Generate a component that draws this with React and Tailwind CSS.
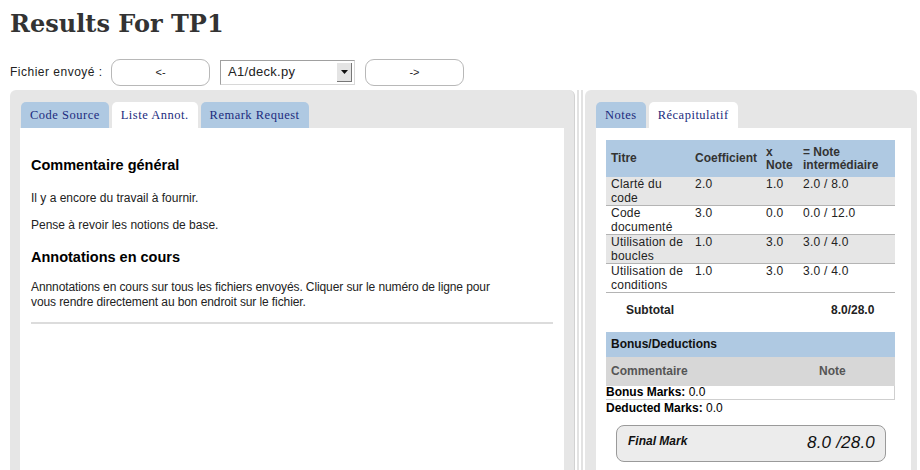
import { useState } from "react"

const rows = [
  { titre: "Clarté du code", coef: "2.0", note: "1.0", inter: "2.0 / 8.0" },
  { titre: "Code documenté", coef: "3.0", note: "0.0", inter: "0.0 / 12.0" },
  { titre: "Utilisation de boucles", coef: "1.0", note: "3.0", inter: "3.0 / 4.0" },
  { titre: "Utilisation de conditions", coef: "1.0", note: "3.0", inter: "3.0 / 4.0" },
]

function Tab({ label, active, onClick }) {
  return (
    <button
      onClick={onClick}
      className={
        "h-[26px] px-[9px] rounded-t-[5px] text-[12.5px] tracking-[0.5px] text-[#1c2b7e] font-['Liberation_Serif',serif] " +
        (active ? "bg-white" : "bg-[#afc9e2]")
      }
    >
      {label}
    </button>
  )
}

function App() {
  const [leftTab, setLeftTab] = useState(1)
  const [rightTab, setRightTab] = useState(1)

  return (
    <div className="w-[920px] h-[470px] overflow-hidden bg-white text-[#222] font-['Liberation_Sans',Arial,sans-serif]">
      <h1 className="pl-[10px] pt-[6px] h-[58px] text-[24px] font-bold text-[#333] font-['DejaVu_Serif','Liberation_Serif',serif]">
        Results For TP1
      </h1>

      <div className="flex items-center h-[28px] pl-[10px] text-[12px]">
        <span className="w-[101px] tracking-[0.5px]">Fichier envoyé :</span>
        <button className="w-[99px] h-[27px] rounded-[9px] border-[1.5px] border-[#b8b8b8] bg-white text-[11px]">
          &lt;-
        </button>
        <div className="ml-[10px] w-[135px] h-[25px] flex items-center border border-[#a0a0a0] border-b-[#d8d8d8] border-r-[#d8d8d8] bg-white">
          <span className="flex-1 pl-[7px] text-[13px] tracking-[0.3px]">A1/deck.py</span>
          <span className="w-[15px] h-[19px] mr-[2px] flex items-center justify-center bg-[#e4e4e4] border-r border-b border-[#777]">
            <svg width="7" height="4" viewBox="0 0 7 4"><path d="M0 0h7L3.5 4z" fill="#111" /></svg>
          </span>
        </div>
        <button className="ml-[10px] w-[99px] h-[27px] rounded-[9px] border-[1.5px] border-[#b8b8b8] bg-white text-[11px]">
          -&gt;
        </button>
      </div>

      <div className="flex mt-[4px] pl-[10px] h-[380px]">
        {/* left panel */}
        <div className="w-[565px] bg-[#e6e6e6] rounded-t-[6px] border-r border-[#d2d2d2] pl-[10px] pr-[10px] pt-[12px] flex flex-col">
          <div className="flex gap-[3px] pl-[1px]">
            {["Code Source", "Liste Annot.", "Remark Request"].map((t, i) => (
              <Tab key={t} label={t} active={leftTab === i} onClick={() => setLeftTab(i)} />
            ))}
          </div>
          <div className="flex-1 bg-white px-[11px] pt-[29px] text-[12px] leading-[14px]">
            <h3 className="text-[14.5px] leading-[17px] font-bold text-black">Commentaire général</h3>
            <p className="mt-[17px]">Il y a encore du travail à fournir.</p>
            <p className="mt-[13px]">Pense à revoir les notions de base.</p>
            <h3 className="mt-[17px] text-[14.5px] leading-[17px] font-bold text-black">Annotations en cours</h3>
            <p className="mt-[14px] leading-[15px] max-w-[472px] tracking-[-0.1px]">
              Annnotations en cours sur tous les fichiers envoyés. Cliquer sur le numéro de ligne pour vous rendre directement au bon endroit sur le fichier.
            </p>
            <div className="mt-[12px] h-[2px] bg-[#dcdcdc]" />
          </div>
        </div>

        {/* splitter */}
        <div className="w-[10px] flex justify-center gap-[2px] bg-white">
          <div className="w-[2px] bg-[#e2e2e2]" />
          <div className="w-[2px] bg-[#e2e2e2]" />
        </div>

        {/* right panel */}
        <div className="w-[332px] bg-[#e6e6e6] rounded-t-[6px] pl-[11px] pr-[6px] pt-[12px] flex flex-col">
          <div className="flex gap-[3px]">
            {["Notes", "Récapitulatif"].map((t, i) => (
              <Tab key={t} label={t} active={rightTab === i} onClick={() => setRightTab(i)} />
            ))}
          </div>
          <div className="flex-1 bg-white pl-[10px] pr-[16px] pt-[12px] text-[12px]">
            <table className="w-[289px] border-collapse table-fixed tracking-[0.25px]">
              <colgroup>
                <col className="w-[84px]" />
                <col className="w-[71px]" />
                <col className="w-[37px]" />
                <col className="w-[97px]" />
              </colgroup>
              <thead>
                <tr className="h-[37px] bg-[#afc9e2] text-[#333] font-bold text-left leading-[13px] tracking-normal">
                  <th className="pl-[5px]">Titre</th>
                  <th className="pl-[5px]">Coefficient</th>
                  <th className="pl-[5px]">x<br />Note</th>
                  <th className="pl-[5px]">= Note<br />intermédiaire</th>
                </tr>
              </thead>
              <tbody>
                {rows.map((r, i) => (
                  <tr key={r.titre} className={"h-[28px] align-top leading-[13.5px] border-b border-[#b4b4b4] " + (i % 2 === 0 ? "bg-[#e6e6e6]" : "bg-white")}>
                    <td className="pl-[5px] pt-[1px]">{r.titre}</td>
                    <td className="pl-[5px] pt-[1px]">{r.coef}</td>
                    <td className="pl-[5px] pt-[1px]">{r.note}</td>
                    <td className="pl-[5px] pt-[1px]">{r.inter}</td>
                  </tr>
                ))}
                <tr className="h-[29px] font-bold tracking-normal">
                  <td colSpan={3} className="pl-[20px] pt-[5px]">Subtotal</td>
                  <td className="pl-[33px] pt-[5px]">8.0/28.0</td>
                </tr>
              </tbody>
            </table>

            <div className="mt-[10px] w-[289px]">
              <div className="h-[25px] flex items-center pl-[5px] bg-[#afc9e2] font-bold text-[#111]">Bonus/Deductions</div>
              <div className="h-[29px] flex items-center bg-[#d7d7d7] font-bold text-[#555]">
                <span className="pl-[5px] w-[213px]">Commentaire</span>
                <span>Note</span>
              </div>
              <div className="h-[14px] leading-[13px] border-r border-b border-[#cfcfcf] text-black">
                <b>Bonus Marks:</b> 0.0
              </div>
              <div className="h-[14px] leading-[14px] mt-[1px] text-black">
                <b>Deducted Marks:</b> 0.0
              </div>
            </div>

            <div className="mt-[10px] ml-[10px] w-[270px] h-[37px] rounded-[8px] border border-[#9a9a9a] bg-[#ececec] flex items-center justify-between pl-[11px] pr-[10px] italic">
              <span className="font-bold text-[12px] text-[#111] -mt-[4px]">Final Mark</span>
              <span className="text-[17px] text-[#111] tracking-[0.2px]">8.0 /28.0</span>
            </div>
          </div>
        </div>
      </div>
    </div>
  )
}

export default App
